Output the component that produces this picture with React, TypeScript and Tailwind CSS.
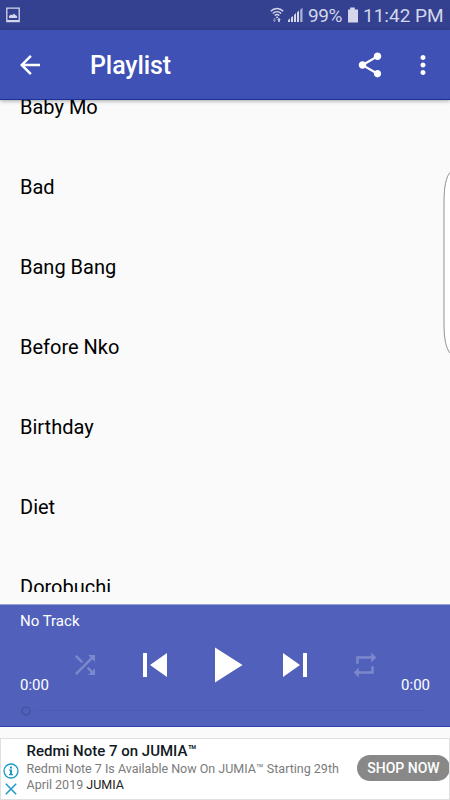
import type { ReactNode } from "react";

const tracks = ["Baby Mo", "Bad", "Bang Bang", "Before Nko", "Birthday", "Diet", "Dorobuchi"];

const Icon = ({ d, className }: { d: string; className: string }) => (
  <svg viewBox="0 0 24 24" fill="currentColor" className={`shrink-0 ${className}`}>
    <path d={d} />
  </svg>
);

const StatusBar = () => (
  <div className="flex h-[30px] shrink-0 items-center bg-[#334190] pl-1.5 pr-[7px] text-[#d4d7e9]">
    <svg viewBox="0 0 14 16" className="h-4 w-3.5">
      <path d="M.8 1.2h12.4v13.4H.8z" fill="none" stroke="currentColor" strokeWidth="1.3" />
      <path d="M3 11V9l2-1.6 1.3.8L8 6.6l1.3 1.3L11 9v2z" fill="currentColor" />
      <path d="M1 13h12v2H1z" fill="currentColor" />
    </svg>
    <svg viewBox="0 0 14 16" className="ml-auto h-4 w-3.5">
      <g fill="none" stroke="currentColor" strokeWidth="1.4">
        <path d="M.8 4.3c3.4-3.8 9-3.8 12.4 0" />
        <path d="M2.8 6.5c2.4-2.5 6-2.5 8.4 0" />
        <path d="M4.7 8.6c1.4-1.4 3.2-1.4 4.6 0" />
      </g>
      <path d="M5.7 10.2 7 9.3l1.3.9L7 11.6z" fill="currentColor" />
      <path d="M4.5 15.3 2.7 13h1v-2h1.6v2h1z" fill="currentColor" opacity=".5" />
      <path d="M9 10.7 7.2 13h1v2h1.6v-2h1z" fill="currentColor" />
    </svg>
    <svg viewBox="0 0 16 16" className="ml-1 h-4 w-4" fill="currentColor">
      <path d="M0 15v-2l2-1.500V15zM3 15v-4.500L5 9v6zM6 15V8l2-2v9zM9 15V5.500l2-2V15z" />
      <path d="M12.200 15V2.800l2.300-2V15z" opacity=".75" />
    </svg>
    <span className="ml-1 w-9 whitespace-nowrap pt-0.5 text-[19px] leading-7 tracking-[-0.4px]">99%</span>
    <svg viewBox="0 0 12 16" className="ml-[3px] h-4 w-3" fill="currentColor">
      <path d="M3.200 .5h4.600v2H11V15.500H1V2.500h2.200z" />
    </svg>
    <span className="ml-1 w-20 whitespace-nowrap pt-0.5 text-[19px] leading-7">11:42 PM</span>
  </div>
);

const Toolbar = () => (
  <header className="relative z-10 flex h-[70px] shrink-0 items-center border-b border-[#1a2f9a] bg-[#3f51b5] pl-[15px] pr-[12.500px] text-white shadow-[0_1px_4px_rgba(0,0,0,0.35)]">
    <Icon className="size-[30px]" d="M20 11H7.830l5.590-5.590L12 4l-8 8 8 8 1.410-1.410L7.830 13H20v-2z" />
    <h1 className="ml-[45px] mt-[3px] text-[25px] font-medium leading-8 tracking-[-0.1px]">Playlist</h1>
    <Icon
      className="ml-auto size-[30px]"
      d="M18 16.080c-.76 0-1.440.3-1.960.77L8.910 12.700c.05-.23.09-.46.09-.7s-.04-.47-.09-.7l7.050-4.110c.54.5 1.250.81 2.040.81 1.660 0 3-1.340 3-3s-1.340-3-3-3-3 1.340-3 3c0 .24.04.47.09.7L8.040 9.810C7.500 9.310 6.790 9 6 9c-1.660 0-3 1.340-3 3s1.340 3 3 3c.79 0 1.500-.31 2.040-.81l7.120 4.160c-.05.21-.08.43-.08.65 0 1.610 1.310 2.920 2.920 2.920 1.610 0 2.920-1.310 2.920-2.920s-1.310-2.920-2.920-2.920z"
    />
    <Icon
      className="ml-[22.500px] size-[30px]"
      d="M12 8c1.100 0 2-.9 2-2s-.9-2-2-2-2 .9-2 2 .9 2 2 2zm0 2c-1.100 0-2 .9-2 2s.9 2 2 2 2-.9 2-2-.9-2-2-2zm0 6c-1.100 0-2 .9-2 2s.9 2 2 2 2-.9 2-2-.9-2-2-2z"
    />
  </header>
);

const TrackList = () => (
  <main className="relative h-[504px] shrink-0 pb-3">
    <ul className="h-[492px] overflow-hidden text-black">
      {tracks.map((name) => (
        <li key={name} className="-mt-[33px] mb-[33px] flex h-20 items-center pl-5 text-[20px] leading-6">
          {name}
        </li>
      ))}
    </ul>
    {/* edge panel handle */}
    <svg viewBox="0 0 7 184" className="absolute right-0 top-[72px] h-[184px] w-[7px]">
      <path d="M7 .5C3 5 1 15 1 30v122c0 15 2 24 6 29" fill="#fff" stroke="#777" strokeWidth=".8" />
    </svg>
  </main>
);

const Control = ({ children }: { children: ReactNode }) => (
  <button className="flex h-[60px] w-[70px] items-center justify-center">{children}</button>
);

const Player = () => (
  <section className="h-[123px] shrink-0 border-b border-t border-b-[#2d41ae] border-t-[#98a2d5] bg-[#5161bb] text-white">
    <p className="h-[30px] pl-5 pt-[6px] text-[15px] leading-5">No Track</p>
    <div className="flex h-[60px] justify-between px-5">
      <span className="w-[30px] pt-10 text-[15px] leading-5">0:00</span>
      <div className="flex">
        <Control>
          <Icon
            className="size-[30px] text-[#7c88cc]"
            d="M10.590 9.170L5.410 4 4 5.410l5.170 5.170 1.420-1.410zM14.500 4l2.040 2.040L4 18.590 5.410 20 17.960 7.460 20 9.500V4h-5.500zm.33 9.410l-1.410 1.410 3.130 3.130L14.500 20H20v-5.500l-2.040 2.040-3.130-3.130z"
          />
        </Control>
        <Control>
          <Icon className="size-[48px]" d="M6 6h2v12H6zm3.500 6l8.500 6V6z" />
        </Control>
        <Control>
          <Icon className="size-[60px]" d="M8 5v14l11-7z" />
        </Control>
        <Control>
          <Icon className="size-[48px]" d="M6 18l8.500-6L6 6v12zM16 6v12h2V6h-2z" />
        </Control>
        <Control>
          <Icon
            className="size-[30px] text-[#7c88cc]"
            d="M7 7h10v3l4-4-4-4v3H5v6h2V7zm10 10H7v-3l-4 4 4 4v-3h12v-6h-2v4z"
          />
        </Control>
      </div>
      <span className="w-[30px] pt-10 text-right text-[15px] leading-5">0:00</span>
    </div>
    <div className="flex h-[31px] items-center pl-[21px] pr-[26px]">
      <span className="size-2.5 rounded-full border-2 border-[#4656a7]" />
      <span className="ml-[3px] h-px flex-1 bg-[#4c5cb4]" />
    </div>
  </section>
);

const AdBanner = () => (
  <aside className="mt-[11px] flex h-[62px] shrink-0 overflow-hidden border border-[#e0e0e0] bg-white">
    <div className="flex w-[25px] shrink-0 flex-col items-center pr-[6px] pt-[24px] text-[#1b9ac4]">
      <svg viewBox="0 0 16 16" className="size-4">
        <circle cx="8" cy="8" r="7" fill="none" stroke="currentColor" strokeWidth="1.300" />
        <path d="M7 3.500h2v2H7zM6.200 6.500H9V11h1v1.300H6V11h1V7.700h-.8z" fill="currentColor" />
      </svg>
      <svg viewBox="0 0 12 12" className="mt-1 size-3">
        <path d="M.8.8l10.400 10.400M11.200.8L.8 11.200" stroke="currentColor" strokeWidth="1.500" />
      </svg>
    </div>
    <div className="w-[331px] shrink-0 whitespace-nowrap pl-[0.500px] pt-[3px]">
      <h2 className="text-[15px] font-medium leading-[19px] text-[#10191f]">Redmi Note 7 on JUMIA™</h2>
      <p className="text-[12.500px] leading-4 text-[#7b7b7b]">
        Redmi Note 7 Is Available Now On JUMIA™ Starting 29th
        <br />
        April 2019 <span className="text-[#222]">JUMIA</span>
      </p>
    </div>
    <button className="mt-4 h-[26px] w-[93px] shrink-0 whitespace-nowrap rounded-full bg-[#888] text-[14px] font-medium leading-[26px] text-white">
      SHOP NOW
    </button>
  </aside>
);

const App = () => (
  <div className="flex h-[800px] w-[450px] flex-col overflow-hidden bg-[#fafafa] font-[Roboto,sans-serif]">
    <StatusBar />
    <Toolbar />
    <TrackList />
    <Player />
    <AdBanner />
  </div>
);

export default App;
